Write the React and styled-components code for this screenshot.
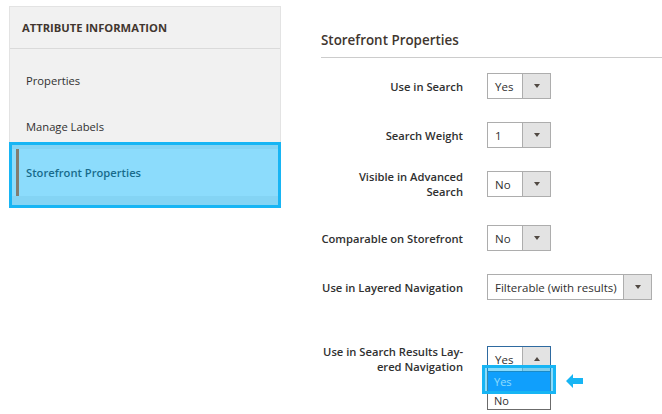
import styled, { createGlobalStyle } from "styled-components";

const GlobalStyle = createGlobalStyle`
  body {
    margin: 0;
    background: #fff;
    font-family: "Open Sans", "Liberation Sans", sans-serif;
    color: #303030;
  }
`;

const Page = styled.div`
  display: flex;
  align-items: flex-start;
  gap: 40px;
  width: 662px;
  height: 414px;
  padding: 6px 0 0 9px;
  box-sizing: border-box;
  overflow: hidden;
`;

const Sidebar = styled.div`
  width: 272px;
  flex-shrink: 0;
  background: #f1f1f1;
  border: 1px solid #e3e3e3;
  box-sizing: border-box;
`;

const SideHeader = styled.div`
  height: 41px;
  display: flex;
  align-items: center;
  padding-left: 12px;
  border-bottom: 1px solid #dadada;
  font-size: 11.2px;
  font-weight: 700;
  color: #41362f;
  text-transform: uppercase;
`;

const TabList = styled.div`
  padding: 8px 0 9px;
`;

const TabItem = styled.div`
  position: relative;
  height: ${(p) => (p.$active ? 47 : 46)}px;
  display: flex;
  align-items: center;
  padding-left: 16px;
  font-size: 11.2px;
  font-weight: ${(p) => (p.$active ? 600 : 400)};
  background: ${(p) => (p.$active ? "#fff" : "transparent")};

  &::before {
    content: "";
    display: ${(p) => (p.$active ? "block" : "none")};
    position: absolute;
    left: 6px;
    top: 0;
    bottom: 0;
    width: 3px;
    background: #eb5202;
  }
`;

// annotation box laid over the picked item
const Highlight = styled.div`
  position: absolute;
  top: ${(p) => p.$top}px;
  bottom: ${(p) => p.$bottom}px;
  left: ${(p) => p.$side}px;
  right: ${(p) => p.$side}px;
  border: 3px solid #17b5f4;
  background: rgba(0, 178, 249, 0.45);
  pointer-events: none;
  z-index: 2;
`;

const Main = styled.div`
  flex: 1;
`;

const SectionTitle = styled.div`
  padding: 24px 0 7px;
  line-height: 20px;
  font-size: 13.4px;
  font-weight: 600;
  color: #41362f;
  border-bottom: 1px solid #cccccc;
`;

const FieldRow = styled.div`
  display: flex;
  align-items: center;
  gap: 24px;
  margin-top: ${(p) => p.$space}px;
  min-height: 26px;
`;

const Label = styled.div`
  width: 142px;
  flex-shrink: 0;
  text-align: right;
  white-space: nowrap;
  font-size: 11.2px;
  font-weight: 600;
  line-height: 15px;
  color: #303030;
`;

const SelectWrap = styled.div`
  position: relative;
`;

const Select = styled.div`
  display: flex;
  width: ${(p) => (p.$wide ? 165 : 64)}px;
  height: 26px;
  box-sizing: border-box;
  border: 1px solid ${(p) => (p.$open ? "#2e6aa0" : "#adadad")};
  background: #fff;
  font-size: 11.5px;
`;

const SelectValue = styled.div`
  flex: 1;
  display: flex;
  align-items: center;
  padding-left: 7px;
  color: #303030;
`;

const SelectButton = styled.div`
  width: 27px;
  display: flex;
  align-items: center;
  justify-content: center;
  background: #e3e3e3;
  border-left: 1px solid #adadad;

  &::after {
    content: "";
    border-left: 3px solid transparent;
    border-right: 3px solid transparent;
    ${(p) => (p.$up ? "border-bottom" : "border-top")}: 4px solid #514943;
  }
`;

const OptionList = styled.div`
  position: absolute;
  top: 100%;
  left: 0;
  width: 64px;
  box-sizing: border-box;
  border: 1px solid #6b6b6b;
  border-top: none;
  background: #fff;
  z-index: 1;
`;

const Option = styled.div`
  position: relative;
  height: ${(p) => (p.$selected ? 19 : 18)}px;
  display: flex;
  align-items: center;
  padding-left: 6px;
  font-size: 11px;
  color: ${(p) => (p.$selected ? "#fff" : "#303030")};
  background: ${(p) => (p.$selected ? "#1e90ff" : "#fff")};
`;

const Pointer = styled.svg`
  position: absolute;
  left: 78px;
  top: 2px;
  z-index: 3;
`;

function Dropdown({ value, wide }) {
  return (
    <Select $wide={wide}>
      <SelectValue>{value}</SelectValue>
      <SelectButton />
    </Select>
  );
}

export default function App() {
  return (
    <>
      <GlobalStyle />
      <Page>
        <Sidebar>
          <SideHeader>Attribute Information</SideHeader>
          <TabList>
            <TabItem>Properties</TabItem>
            <TabItem>Manage Labels</TabItem>
            <TabItem $active>
              Storefront Properties
              <Highlight $top={-7} $bottom={-12} $side={-1} />
            </TabItem>
          </TabList>
        </Sidebar>

        <Main>
          <SectionTitle>Storefront Properties</SectionTitle>

          <FieldRow $space={15}>
            <Label>Use in Search</Label>
            <Dropdown value="Yes" />
          </FieldRow>
          <FieldRow $space={23}>
            <Label>Search Weight</Label>
            <Dropdown value="1" />
          </FieldRow>
          <FieldRow $space={21}>
            <Label>
              Visible in Advanced
              <br />
              Search
            </Label>
            <Dropdown value="No" />
          </FieldRow>
          <FieldRow $space={26}>
            <Label>Comparable on Storefront</Label>
            <Dropdown value="No" />
          </FieldRow>
          <FieldRow $space={23}>
            <Label>Use in Layered Navigation</Label>
            <Dropdown value="Filterable (with results)" wide />
          </FieldRow>
          <FieldRow $space={44}>
            <Label>
              Use in Search Results Lay-
              <br />
              ered Navigation
            </Label>
            <SelectWrap>
              <Select $open>
                <SelectValue>Yes</SelectValue>
                <SelectButton $up />
              </Select>
              <OptionList>
                <Option $selected>
                  Yes
                  <Highlight $top={-7} $bottom={-3} $side={-6} />
                  <Pointer width="17" height="14" viewBox="0 0 17 14">
                    <path d="M0 7 L7 0 V4 H17 V10 H7 V14 Z" fill="#17b5f4" />
                  </Pointer>
                </Option>
                <Option>No</Option>
              </OptionList>
            </SelectWrap>
          </FieldRow>
        </Main>
      </Page>
    </>
  );
}
